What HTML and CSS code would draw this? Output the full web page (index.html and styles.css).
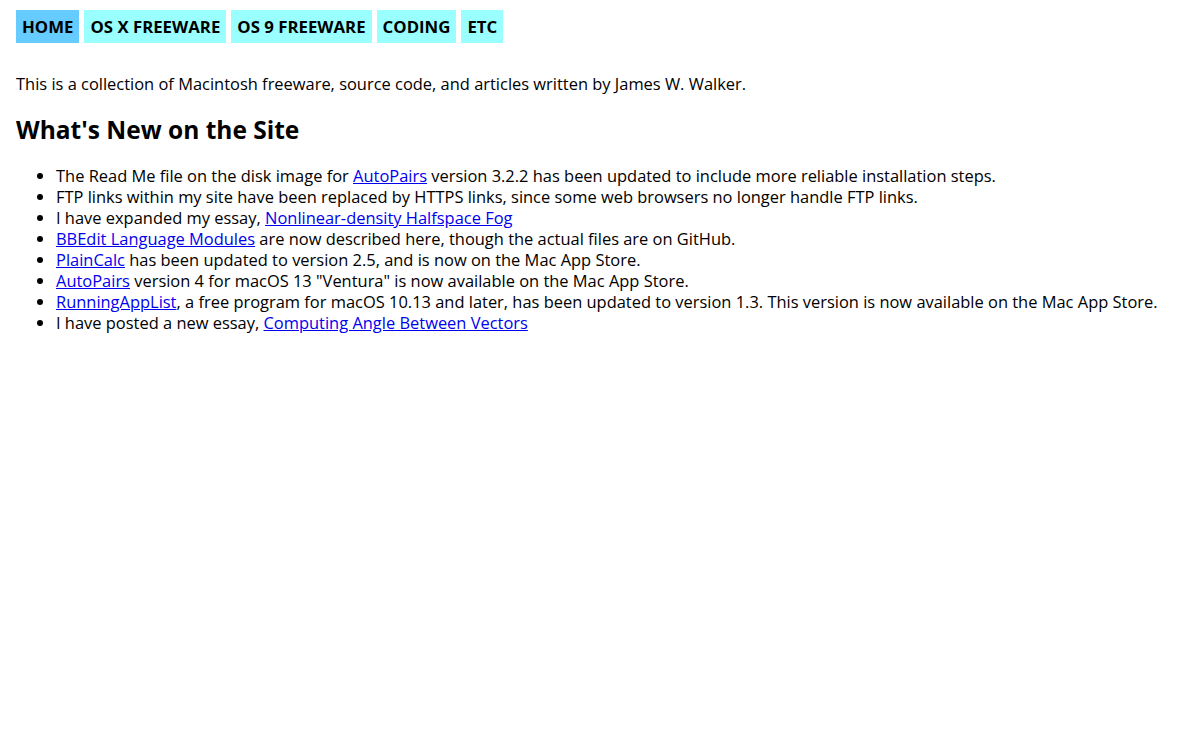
FILE: index.html
```html
<!DOCTYPE html>
<html lang="en">
<head>
    <meta charset="UTF-8">
    <meta name="viewport" content="width=device-width, initial-scale=1.0">
    <title>James W. Walker</title>
    <link rel="stylesheet" href="styles.css">
</head>
<body>
    <nav class="menu">
      <a class="tab current" href="#">HOME</a>
      <a class="tab" href="#">OS X FREEWARE</a>
      <a class="tab" href="#">OS 9 FREEWARE</a>
      <a class="tab" href="#">CODING</a>
      <a class="tab" href="#">ETC</a>
    </nav>

    <p class="intro">This is a collection of Macintosh freeware, source code, and articles written by James W. Walker.</p>

    <h1>What's New on the Site</h1>
    <ul class="news">
      <li>The Read Me file on the disk image for <a href="#">AutoPairs</a> version 3.2.2 has been updated to include more reliable installation steps.</li>
      <li>FTP links within my site have been replaced by HTTPS links, since some web browsers no longer handle FTP links.</li>
      <li>I have expanded my essay, <a href="#">Nonlinear-density Halfspace Fog</a></li>
      <li><a href="#">BBEdit Language Modules</a> are now described here, though the actual files are on GitHub.</li>
      <li><a href="#">PlainCalc</a> has been updated to version 2.5, and is now on the Mac App Store.</li>
      <li><a href="#">AutoPairs</a> version 4 for macOS 13 "Ventura" is now available on the Mac App Store.</li>
      <li><a href="#">RunningAppList</a>, a free program for macOS 10.13 and later, has been updated to version 1.3. This version is now available on the Mac App Store.</li>
      <li>I have posted a new essay, <a href="#">Computing Angle Between Vectors</a></li>
    </ul>
</body>
</html>
```

FILE: styles.css
```css
body {
  margin: 10px 16px;
  font-family: "Open Sans", "Liberation Sans", sans-serif;
  font-size: 16.45px;
  line-height: 21px;
  color: #000;
  background: #fff;
}
a {
  color: #0000ee;
}
.menu {
  display: flex;
  gap: 5px;
}
.tab {
  display: block;
  padding: 6px 6px;
  line-height: 21px;
  font-size: 16.8px;
  font-weight: bold;
  color: #000;
  text-decoration: none;
  background-color: #99ffff;
}
.tab.current {
  background-color: #66ccff;
}
.intro {
  margin: 30px 0 0;
}
h1 {
  font-size: 24.5px;
  line-height: 32px;
  margin: 20px 0 19px;
}
.news {
  margin: 0;
  padding-left: 40px;
}
```
